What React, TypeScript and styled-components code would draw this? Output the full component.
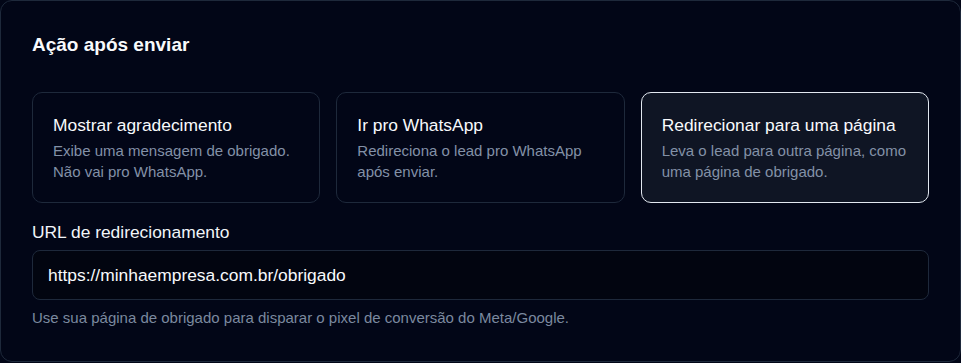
import styled, { createGlobalStyle } from 'styled-components';

const GlobalStyle = createGlobalStyle`
  * { box-sizing: border-box; }
  html, body {
    margin: 0;
    background: #020617;
  }
  body {
    font-family: "Liberation Sans", Arial, sans-serif;
    color: #f8fafc;
  }
`;

const Panel = styled.section`
  display: flex;
  flex-direction: column;
  width: 961px;
  height: 362px;
  padding: 30px 31px 32px 31px;
  background: #020617;
  border: 1px solid #1e293b;
  border-radius: 12px;
`;

const Heading = styled.h2`
  margin: 0;
  font-size: 19px;
  line-height: 28px;
  font-weight: 700;
  color: #f8fafc;
`;

const Options = styled.div`
  display: grid;
  grid-template-columns: repeat(3, 1fr);
  gap: 16px;
  margin-top: 33px;
`;

const Option = styled.button<{ $active?: boolean }>`
  display: flex;
  flex-direction: column;
  align-items: flex-start;
  padding: 20px;
  text-align: left;
  font-family: inherit;
  background: ${(p) => (p.$active ? '#0f1524' : '#020617')};
  border: 1px solid ${(p) => (p.$active ? '#e2e8f0' : '#1e293b')};
  border-radius: 10px;
  cursor: pointer;
`;

const OptionTitle = styled.span`
  font-size: 17.4px;
  line-height: 24px;
  color: #f8fafc;
`;

const OptionText = styled.span`
  margin-top: 3px;
  font-size: 15px;
  line-height: 21px;
  color: #8391a7;
`;

const Field = styled.label`
  display: flex;
  flex-direction: column;
  gap: 6px;
  margin-top: 17px;
`;

const FieldLabel = styled.span`
  font-size: 17.4px;
  line-height: 24px;
  color: #f1f5f9;
`;

const Input = styled.input`
  height: 50px;
  padding: 0 15px;
  font-family: inherit;
  font-size: 17.4px;
  color: #f8fafc;
  background: #020510;
  border: 1px solid #1e293b;
  border-radius: 8px;
  outline: none;
`;

const Hint = styled.p`
  margin: 8px 0 0;
  font-size: 15px;
  line-height: 20px;
  color: #7b899f;
`;

const options = [
  {
    title: 'Mostrar agradecimento',
    text: ['Exibe uma mensagem de obrigado.', 'Não vai pro WhatsApp.'],
  },
  {
    title: 'Ir pro WhatsApp',
    text: ['Redireciona o lead pro WhatsApp', 'após enviar.'],
  },
  {
    title: 'Redirecionar para uma página',
    text: ['Leva o lead para outra página, como', 'uma página de obrigado.'],
    active: true,
  },
];

export default function App() {
  return (
    <>
      <GlobalStyle />
      <Panel>
        <Heading>Ação após enviar</Heading>
        <Options>
          {options.map((o) => (
            <Option key={o.title} $active={o.active} type="button">
              <OptionTitle>{o.title}</OptionTitle>
              <OptionText>
                {o.text[0]}
                <br />
                {o.text[1]}
              </OptionText>
            </Option>
          ))}
        </Options>
        <Field>
          <FieldLabel>URL de redirecionamento</FieldLabel>
          <Input defaultValue="https://minhaempresa.com.br/obrigado" />
        </Field>
        <Hint>Use sua página de obrigado para disparar o pixel de conversão do Meta/Google.</Hint>
      </Panel>
    </>
  );
}
